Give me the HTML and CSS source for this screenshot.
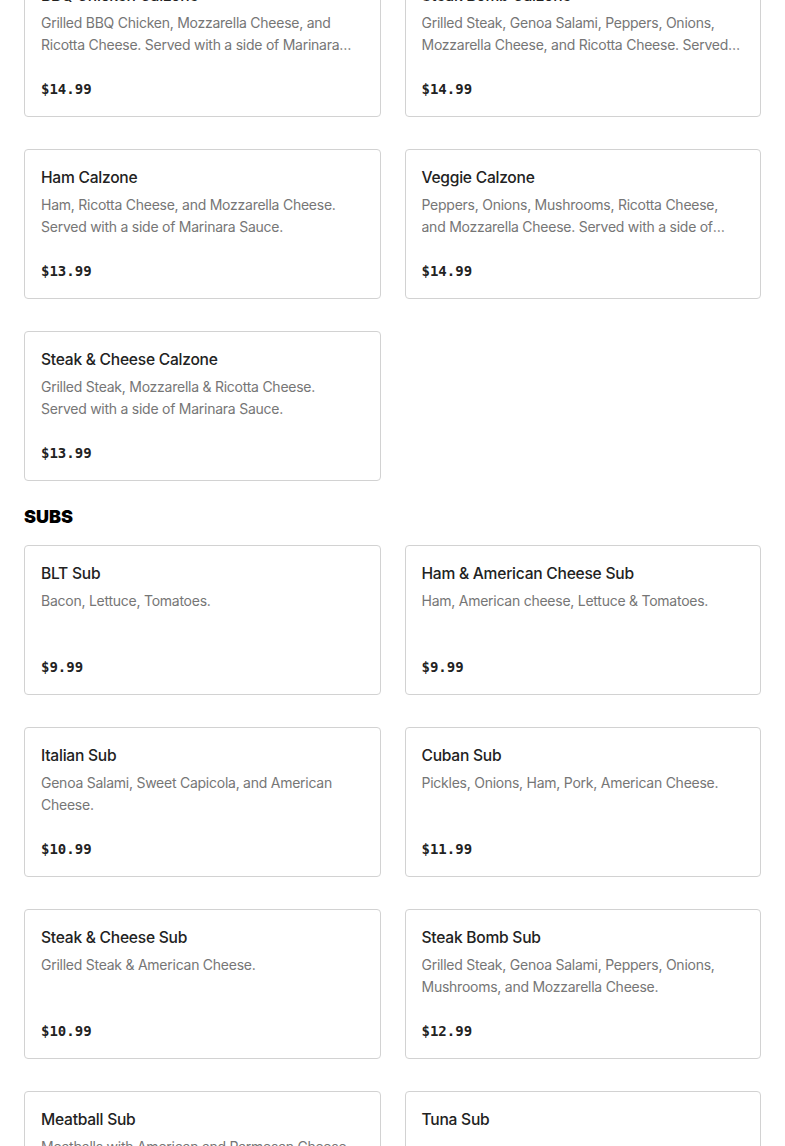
FILE: index.html
```html
<!DOCTYPE html>
<html lang="en">
<head>
<meta charset="utf-8">
<title>Menu</title>
<link rel="stylesheet" href="styles.css">
</head>
<body>
<main class="menu">
  <section class="section section-first">
    <div class="grid">
      <div class="card"><h3 class="title">BBQ Chicken Calzone</h3><p class="desc">Grilled BBQ Chicken, Mozzarella Cheese, and Ricotta Cheese. Served with a side of Marinara Sauce.</p><div class="price">$14.99</div></div>
      <div class="card"><h3 class="title">Steak Bomb Calzone</h3><p class="desc">Grilled Steak, Genoa Salami, Peppers, Onions, Mozzarella Cheese, and Ricotta Cheese. Served with a side of Marinara Sauce.</p><div class="price">$14.99</div></div>
      <div class="card"><h3 class="title">Ham Calzone</h3><p class="desc">Ham, Ricotta Cheese, and Mozzarella Cheese. Served with a side of Marinara Sauce.</p><div class="price">$13.99</div></div>
      <div class="card"><h3 class="title">Veggie Calzone</h3><p class="desc">Peppers, Onions, Mushrooms, Ricotta Cheese, and Mozzarella Cheese. Served with a side of Marinara Sauce.</p><div class="price">$14.99</div></div>
      <div class="card"><h3 class="title">Steak &amp; Cheese Calzone</h3><p class="desc">Grilled Steak, Mozzarella &amp; Ricotta Cheese. Served with a side of Marinara Sauce.</p><div class="price">$13.99</div></div>
    </div>
  </section>
  <section class="section">
    <h2 class="heading">SUBS</h2>
    <div class="grid">
      <div class="card"><h3 class="title">BLT Sub</h3><p class="desc">Bacon, Lettuce, Tomatoes.</p><div class="price">$9.99</div></div>
      <div class="card"><h3 class="title">Ham &amp; American Cheese Sub</h3><p class="desc">Ham, American cheese, Lettuce &amp; Tomatoes.</p><div class="price">$9.99</div></div>
      <div class="card"><h3 class="title">Italian Sub</h3><p class="desc">Genoa Salami, Sweet Capicola, and American Cheese.</p><div class="price">$10.99</div></div>
      <div class="card"><h3 class="title">Cuban Sub</h3><p class="desc">Pickles, Onions, Ham, Pork, American Cheese.</p><div class="price">$11.99</div></div>
      <div class="card"><h3 class="title">Steak &amp; Cheese Sub</h3><p class="desc">Grilled Steak &amp; American Cheese.</p><div class="price">$10.99</div></div>
      <div class="card"><h3 class="title">Steak Bomb Sub</h3><p class="desc">Grilled Steak, Genoa Salami, Peppers, Onions, Mushrooms, and Mozzarella Cheese.</p><div class="price">$12.99</div></div>
      <div class="card"><h3 class="title">Meatball Sub</h3><p class="desc">Meatballs with American and Parmesan Cheese.</p><div class="price">$10.99</div></div>
      <div class="card"><h3 class="title">Tuna Sub</h3><p class="desc"></p><div class="price">$9.99</div></div>
    </div>
  </section>
</main>
</body>
</html>
```

FILE: styles.css
```css
html, body {
  margin: 0;
  padding: 0;
  background: #ffffff;
}

body {
  font-family: Inter, "Liberation Sans", Arial, sans-serif;
  color: #222222;
  overflow: hidden;
}

.menu {
  padding: 0 24px;
  margin-top: -33px;
}

.section + .section {
  margin-top: 24px;
}

.heading {
  margin: 0 0 16px 0;
  font-size: 18px;
  line-height: 24px;
  font-weight: 900;
  color: #000000;
}

.grid {
  display: grid;
  grid-template-columns: 1fr 1fr;
  column-gap: 24px;
  row-gap: 32px;
}

.card {
  box-sizing: border-box;
  height: 150px;
  border: 1px solid #d2d2d2;
  border-radius: 4px;
  padding: 16px;
  display: flex;
  flex-direction: column;
}

.title {
  margin: 0 0 4px 0;
  font-size: 15.6px;
  line-height: 24px;
  font-weight: 500;
  letter-spacing: -0.25px;
  color: #222222;
}

.desc {
  margin: 0;
  font-size: 14px;
  line-height: 22px;
  letter-spacing: -0.25px;
  color: #767676;
  display: -webkit-box;
  -webkit-line-clamp: 2;
  -webkit-box-orient: vertical;
  overflow: hidden;
}

.price {
  margin-top: auto;
  font-family: "DejaVu Sans Mono", "Liberation Mono", monospace;
  font-size: 14px;
  line-height: 22px;
  font-weight: 700;
  color: #222222;
}
```
